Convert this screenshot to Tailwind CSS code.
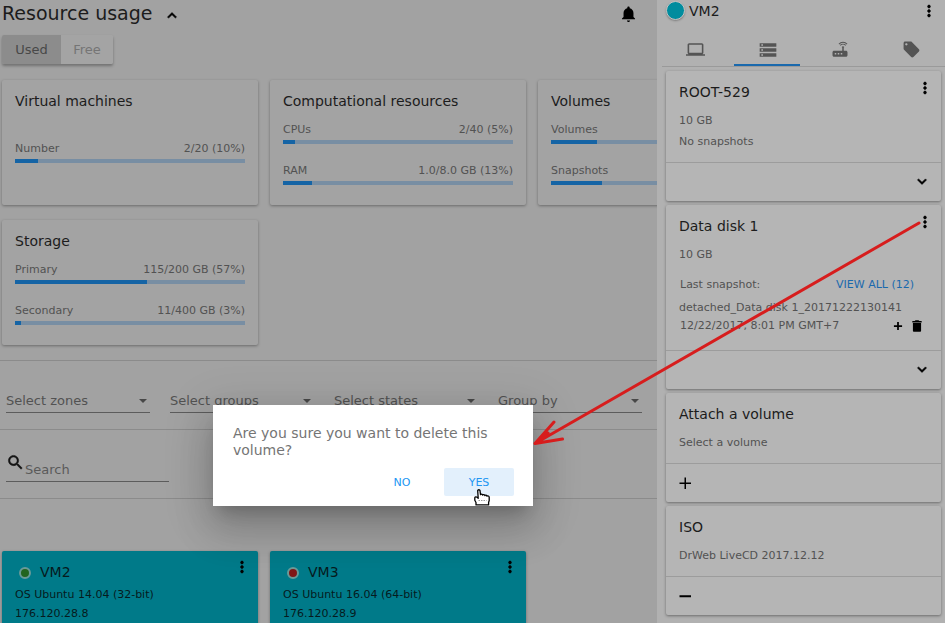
<!DOCTYPE html>
<html lang="en">
<head>
<meta charset="utf-8">
<title>Virtual machines</title>
<script src="https://cdn.jsdelivr.net/npm/@tailwindcss/browser@4"></script>
</head>
<body class="relative h-screen overflow-hidden bg-[#a2a2a2] font-['DejaVu_Sans',sans-serif] text-[11px] leading-4 text-[#525252]">
<svg class="hidden">
  <symbol id="more" viewBox="0 0 24 24"><path d="M12 8c1.100 0 2-.9 2-2s-.9-2-2-2-2 .9-2 2 .9 2 2 2zm0 2c-1.100 0-2 .9-2 2s.9 2 2 2 2-.9 2-2-.9-2-2-2zm0 6c-1.100 0-2 .9-2 2s.9 2 2 2 2-.9 2-2-.9-2-2-2z" stroke="currentColor" stroke-width=".6"/></symbol>
  <symbol id="down" viewBox="0 0 24 24"><path d="M7.410 7.840L12 12.420l4.590-4.580L18 9.250l-6 6-6-6z" stroke="currentColor" stroke-width=".8"/></symbol>
  <symbol id="plus" viewBox="0 0 24 24"><path d="M19 13.500h-5.500V19h-3v-5.500H5v-3h5.500V5h3v5.500H19z"/></symbol>
</svg>

<div class="flex h-full">
  <main class="min-w-0 flex-1 overflow-hidden">
    <header class="flex h-[35px] items-start pl-[2px] pr-5">
      <h1 class="text-[19px] leading-[27px] text-[#1c1c1c]">Resource usage</h1>
      <button aria-label="Collapse" class="ml-[10px] mt-[6px] text-black"><svg class="size-[18px] rotate-180 fill-current"><use href="#down"/></svg></button>
      <button aria-label="Notifications" class="ml-auto mt-[6px] text-black"><svg viewBox="0 0 24 24" class="size-[17px] fill-current"><path d="M12 22.500c1.200 0 2.200-1 2.200-2.200H9.800c0 1.200 1 2.200 2.200 2.200zM19 15.500V10c0-3.300-2.200-6-5.300-6.700v-.8c0-1-.7-1.700-1.700-1.700s-1.700.7-1.700 1.700v.8C7.200 4 5 6.700 5 10v5.500l-2.200 2.200v1.100h18.400v-1.100z"/></svg></button>
    </header>

    <div class="ml-[2px] flex h-[29px] w-fit overflow-hidden rounded-[2px] text-[13px] shadow-[0_2px_3px_rgba(0,0,0,0.3)]">
      <button class="w-[59px] bg-[#8c8c8c] text-[#484848]">Used</button>
      <button class="w-[52px] bg-[#a4a4a4] text-[#757575]">Free</button>
    </div>

    <section class="mt-4 grid grid-cols-[256px_256px_256px] gap-x-3 gap-y-[15px] border-b border-[#8b8b8b] pb-[15px] pl-[2px]">
      <article class="h-[125px] rounded-[2px] bg-[#a3a3a3] px-[13px] pt-[11px] shadow-[0_1px_3px_rgba(0,0,0,0.35)]">
        <h2 class="text-[14px] leading-5 text-[#1c1c1c]">Virtual machines</h2>
        <div class="mt-[30px] flex justify-between"><span>Number</span><span>2/20 (10%)</span></div>
        <div role="progressbar" aria-label="Number" class="mt-[2px] h-1 bg-[#788ea3]"><div class="h-full bg-[#1564a5]" style="width:10%"></div></div>
      </article>
      <article class="h-[125px] rounded-[2px] bg-[#a3a3a3] px-[13px] pt-[11px] shadow-[0_1px_3px_rgba(0,0,0,0.35)]">
        <h2 class="text-[14px] leading-5 text-[#1c1c1c]">Computational resources</h2>
        <div class="mt-[11px] flex justify-between"><span>CPUs</span><span>2/40 (5%)</span></div>
        <div role="progressbar" aria-label="CPUs" class="mt-[2px] h-1 bg-[#788ea3]"><div class="h-full bg-[#1564a5]" style="width:5%"></div></div>
        <div class="mt-[19px] flex justify-between"><span>RAM</span><span>1.0/8.0 GB (13%)</span></div>
        <div role="progressbar" aria-label="RAM" class="mt-[2px] h-1 bg-[#788ea3]"><div class="h-full bg-[#1564a5]" style="width:12.5%"></div></div>
      </article>
      <article class="h-[125px] rounded-[2px] bg-[#a3a3a3] px-[13px] pt-[11px] shadow-[0_1px_3px_rgba(0,0,0,0.35)]">
        <h2 class="text-[14px] leading-5 text-[#1c1c1c]">Volumes</h2>
        <div class="mt-[11px] flex justify-between"><span>Volumes</span></div>
        <div role="progressbar" aria-label="Volumes" class="mt-[2px] h-1 bg-[#788ea3]"><div class="h-full bg-[#1564a5]" style="width:20%"></div></div>
        <div class="mt-[19px] flex justify-between"><span>Snapshots</span></div>
        <div role="progressbar" aria-label="Snapshots" class="mt-[2px] h-1 bg-[#788ea3]"><div class="h-full bg-[#1564a5]" style="width:22%"></div></div>
      </article>
      <article class="h-[125px] rounded-[2px] bg-[#a3a3a3] px-[13px] pt-[11px] shadow-[0_1px_3px_rgba(0,0,0,0.35)]">
        <h2 class="text-[14px] leading-5 text-[#1c1c1c]">Storage</h2>
        <div class="mt-[11px] flex justify-between"><span>Primary</span><span>115/200 GB (57%)</span></div>
        <div role="progressbar" aria-label="Primary" class="mt-[2px] h-1 bg-[#788ea3]"><div class="h-full bg-[#1564a5]" style="width:57.5%"></div></div>
        <div class="mt-[19px] flex justify-between"><span>Secondary</span><span>11/400 GB (3%)</span></div>
        <div role="progressbar" aria-label="Secondary" class="mt-[2px] h-1 bg-[#788ea3]"><div class="h-full bg-[#1564a5]" style="width:2.75%"></div></div>
      </article>
    </section>

    <section class="flex gap-5 border-b border-[#8b8b8b] pb-4 pl-[6px] pt-[29px] text-[13px]">
      <label class="relative w-36 shrink-0 border-b border-[#5c5c5c]"><select aria-label="Zones" class="block h-[22px] w-full appearance-none text-[#525252]"><option>Select zones</option></select><span class="absolute right-[3px] top-[9px] border-x-4 border-t-4 border-x-transparent border-t-[#484848]"></span></label>
      <label class="relative w-36 shrink-0 border-b border-[#5c5c5c]"><select aria-label="Groups" class="block h-[22px] w-full appearance-none text-[#525252]"><option>Select groups</option></select><span class="absolute right-[3px] top-[9px] border-x-4 border-t-4 border-x-transparent border-t-[#484848]"></span></label>
      <label class="relative w-36 shrink-0 border-b border-[#5c5c5c]"><select aria-label="States" class="block h-[22px] w-full appearance-none text-[#525252]"><option>Select states</option></select><span class="absolute right-[3px] top-[9px] border-x-4 border-t-4 border-x-transparent border-t-[#484848]"></span></label>
      <label class="relative w-36 shrink-0 border-b border-[#5c5c5c]"><select aria-label="Group by" class="block h-[22px] w-full appearance-none text-[#525252]"><option>Group by</option></select><span class="absolute right-[3px] top-[9px] border-x-4 border-t-4 border-x-transparent border-t-[#484848]"></span></label>
    </section>

    <section class="border-b border-[#8b8b8b] pb-4 pl-[6px] pt-[23px]">
      <label class="flex h-[29px] w-[163px] border-b border-[#5c5c5c]">
        <svg viewBox="0 0 24 24" class="size-[19px] shrink-0 fill-[#141414] stroke-[#141414] stroke-[.6]"><path d="M15.500 14h-.79l-.28-.27C15.410 12.590 16 11.110 16 9.500 16 5.910 13.090 3 9.500 3S3 5.910 3 9.500 5.910 16 9.500 16c1.610 0 3.090-.59 4.230-1.570l.27.28v.79l5 4.990L20.490 19l-4.990-5zm-6 0C7.010 14 5 11.990 5 9.500S7.010 5 9.500 5 14 7.010 14 9.500 11.990 14 9.500 14z"/></svg>
        <input type="search" aria-label="Search" placeholder="Search" class="mt-[6px] h-5 w-full min-w-0 text-[13px] outline-none placeholder:text-[#5a5a5a]">
      </label>
    </section>

    <section class="grid grid-cols-[256px_256px] gap-3 pl-[2px] pt-[52px]">
      <article class="h-[125px] rounded-[2px] bg-[#007a89] pl-[13px] pr-[7px] pt-[6px] text-[#061b1e] shadow-[0_1px_3px_rgba(0,0,0,0.35)]">
        <div class="flex items-start">
          <span class="ml-1 mt-[10px] size-3 rounded-full border-2 border-[#6a9a98] bg-[#22641f]"></span>
          <h2 class="ml-[9px] mt-[5px] text-[14px] leading-5">VM2</h2>
          <button aria-label="VM2 actions" class="ml-auto mt-px text-black"><svg class="size-[18px] fill-current"><use href="#more"/></svg></button>
        </div>
        <p class="mt-[5px]">OS Ubuntu 14.04 (32-bit)</p>
        <p class="mt-[3px]">176.120.28.8</p>
      </article>
      <article class="h-[125px] rounded-[2px] bg-[#007a89] pl-[13px] pr-[7px] pt-[6px] text-[#061b1e] shadow-[0_1px_3px_rgba(0,0,0,0.35)]">
        <div class="flex items-start">
          <span class="ml-1 mt-[10px] size-3 rounded-full border-2 border-[#6a9a98] bg-[#801616]"></span>
          <h2 class="ml-[9px] mt-[5px] text-[14px] leading-5">VM3</h2>
          <button aria-label="VM3 actions" class="ml-auto mt-px text-black"><svg class="size-[18px] fill-current"><use href="#more"/></svg></button>
        </div>
        <p class="mt-[5px]">OS Ubuntu 16.04 (64-bit)</p>
        <p class="mt-[3px]">176.120.28.9</p>
      </article>
    </section>
  </main>

  <aside class="w-72 shrink-0 overflow-hidden bg-[#b1b1b1] pl-[5px]">
    <header class="flex h-[33px] items-start pl-1 pr-[7px]">
      <span class="mt-px size-[19px] rounded-full border border-[#c6c6c6] bg-[#008c9e] shadow-[0_1px_2px_rgba(0,0,0,0.3)]"></span>
      <h2 class="ml-1 mt-px text-[14px] leading-5 text-[#1c1c1c]">VM2</h2>
      <button aria-label="More" class="ml-auto mt-[2px] text-black"><svg class="size-[18px] fill-current"><use href="#more"/></svg></button>
    </header>
    <nav class="grid h-[34px] grid-cols-4 gap-[6px] border-b border-[#9a9a9a] pr-px text-[#545454]">
      <button aria-label="Virtual machine" class="flex justify-center pl-px pt-[7px]"><svg viewBox="0 0 24 24" class="size-[19px] fill-current"><path d="M20 18c1.100 0 1.990-.9 1.990-2L22 6c0-1.100-.9-2-2-2H4c-1.100 0-2 .9-2 2v10c0 1.100.9 2 2 2H0v2h24v-2h-4zM4 6h16v10H4V6z"/></svg></button>
      <button aria-label="Storage" class="flex justify-center border-b-2 border-[#1a69ad] pl-px pt-[7px]"><svg viewBox="0 0 24 24" class="size-5 fill-current"><path d="M2 20h20v-4H2v4zm2-3h2v2H4v-2zM2 4v4h20V4H2zm4 3H4V5h2v2zm-4 7h20v-4H2v4zm2-3h2v2H4v-2z"/></svg></button>
      <button aria-label="Network" class="flex justify-center pl-px pt-2"><svg viewBox="0 0 24 24" class="size-[18px] fill-current"><path d="M4 13h11V8h2v5h3c1.100 0 2 .9 2 2v4c0 1.100-.9 2-2 2H4c-1.100 0-2-.9-2-2v-4c0-1.100.9-2 2-2zm1 3v2h2v-2H5zm4 0v2h2v-2H9zm4 0v2h2v-2h-2zM12.800 6.300l-.9-.9a5.700 5.700 0 0 1 8.200 0l-.9.9a4.500 4.500 0 0 0-6.400 0zM11 4.500l-.9-.9a8.300 8.300 0 0 1 11.800 0l-.9.9a7 7 0 0 0-10 0zM14.200 7.900a2.500 2.500 0 0 1 3.600 0l-.8.8h-2z"/></svg></button>
      <button aria-label="Tags" class="flex justify-center pl-px pt-[7px]"><svg viewBox="0 0 24 24" class="size-[19px] fill-current"><path d="M21.410 11.580l-9-9C12.050 2.220 11.550 2 11 2H4c-1.100 0-2 .9-2 2v7c0 .55.220 1.050.59 1.420l9 9c.36.36.86.58 1.410.58s1.050-.22 1.410-.59l7-7c.37-.36.59-.86.59-1.410s-.23-1.060-.59-1.420zM5.500 7C4.670 7 4 6.330 4 5.500S4.670 4 5.500 4 7 4.670 7 5.500 6.330 7 5.500 7z"/></svg></button>
    </nav>

    <div class="flex flex-col gap-1 pl-1 pr-1 pt-1">
      <article class="rounded-[2px] bg-[#b5b5b5] shadow-[0_1px_3px_rgba(0,0,0,0.4)]">
        <div class="h-[91px] pl-[13px] pr-[7px] pt-[8px]">
          <div class="flex items-start justify-between">
            <h3 class="mt-[3px] text-[14px] leading-5 text-[#1c1c1c]">ROOT-529</h3>
            <button aria-label="ROOT-529 actions" class="text-black"><svg class="size-[18px] fill-current"><use href="#more"/></svg></button>
          </div>
          <p class="mt-[11px]">10 GB</p>
          <p class="mt-[5px]">No snapshots</p>
        </div>
        <div class="flex h-[39px] items-center justify-end border-t border-[#9c9c9c] pr-[10px]"><button aria-label="Expand" class="text-black"><svg class="size-[18px] fill-current"><use href="#down"/></svg></button></div>
      </article>

      <article class="rounded-[2px] bg-[#b5b5b5] shadow-[0_1px_3px_rgba(0,0,0,0.4)]">
        <div class="h-[145px] pl-[13px] pr-[7px] pt-[8px]">
          <div class="flex items-start justify-between">
            <h3 class="mt-[3px] text-[14px] leading-5 text-[#1c1c1c]">Data disk 1</h3>
            <button aria-label="Data disk 1 actions" class="text-black"><svg class="size-[18px] fill-current"><use href="#more"/></svg></button>
          </div>
          <p class="mt-[11px]">10 GB</p>
          <div class="mt-[14px] flex justify-between pl-px pr-5"><span>Last snapshot:</span><a href="#" class="text-[#1a69ad]">VIEW ALL (12)</a></div>
          <p class="mt-[7px]">detached_Data disk 1_20171222130141</p>
          <div class="mt-[2px] flex items-center pl-px pr-[10px]"><span>12/22/2017, 8:01 PM GMT+7</span>
            <button aria-label="Add snapshot" class="ml-auto text-black"><svg class="size-[14px] fill-current"><use href="#plus"/></svg></button>
            <button aria-label="Delete snapshot" class="ml-[5px] text-black"><svg viewBox="0 0 24 24" class="size-[14px] fill-current"><path d="M5 20c0 1.100.9 2 2 2h10c1.100 0 2-.9 2-2V7H5v13zM20 3.500h-4L14.500 2h-5L8 3.500H4v2.500h16z"/></svg></button>
          </div>
        </div>
        <div class="flex h-[39px] items-center justify-end border-t border-[#9c9c9c] pr-[10px]"><button aria-label="Expand" class="text-black"><svg class="size-[18px] fill-current"><use href="#down"/></svg></button></div>
      </article>

      <article class="rounded-[2px] bg-[#b5b5b5] shadow-[0_1px_3px_rgba(0,0,0,0.4)]">
        <div class="h-[70px] px-[13px] pt-[11px]">
          <h3 class="text-[14px] leading-5 text-[#1c1c1c]">Attach a volume</h3>
          <p class="mt-[11px]">Select a volume</p>
        </div>
        <div class="flex h-[39px] items-center border-t border-[#9c9c9c] pl-[10px]"><button aria-label="Attach" class="text-black"><svg viewBox="0 0 18 18" class="size-[18px] fill-none stroke-current stroke-[1.5]"><path d="M3.500 9.250h11.500M9.250 3.500v11.500"/></svg></button></div>
      </article>

      <article class="rounded-[2px] bg-[#b5b5b5] shadow-[0_1px_3px_rgba(0,0,0,0.4)]">
        <div class="h-[70px] px-[13px] pt-[11px]">
          <h3 class="text-[14px] leading-5 text-[#1c1c1c]">ISO</h3>
          <p class="mt-[11px]">DrWeb LiveCD 2017.12.12</p>
        </div>
        <div class="flex h-[39px] items-center border-t border-[#9c9c9c] pl-[10px]"><button aria-label="Detach" class="text-black"><svg viewBox="0 0 18 18" class="size-[18px] fill-none stroke-current stroke-2"><path d="M3.500 9.250h11.500"/></svg></button></div>
      </article>
    </div>
  </aside>
</div>

<div role="dialog" aria-labelledby="question" class="absolute left-[213px] top-[405px] w-80 bg-white pb-[10px] pl-5 pr-[19px] pt-5 shadow-[0_11px_15px_-7px_rgba(0,0,0,0.2),0_24px_38px_3px_rgba(0,0,0,0.14),0_9px_46px_8px_rgba(0,0,0,0.12)]">
  <p id="question" class="text-[14px] leading-[17px] text-[#757575]">Are you sure you want to delete this volume?</p>
  <div class="mt-[9px] flex justify-end gap-[7px] text-[#2196f3]">
    <button class="h-7 w-[70px] rounded-[2px] pt-px">NO</button>
    <button class="h-7 w-[70px] rounded-[2px] bg-[#e3f0fc] pt-px">YES</button>
  </div>
</div>

<!-- Pointer over the confirm button -->
<svg viewBox="0 0 16 17" class="pointer-events-none absolute left-[474px] top-[489px] h-[17px] w-4">
  <path d="M3.700 1.700c0-1.300 2.200-1.300 2.300 0l.5 4c.3-.8 2-.7 2.200.3.400-.7 2-.5 2.200.5.500-.6 1.800-.3 2 .6.900-.6 2.300 0 2.300 1.200v3.200l-.6 2v2.400H2v-2.400L.8 11.200V8.600c.3-1.100 1.800-1 2.400-.2l1 1z" fill="#fff" stroke="#000" stroke-width="1.300" stroke-linejoin="round"/>
  <path d="M4.500 11.500h8" stroke="#999" stroke-dasharray="1.500 1"/>
</svg>

<!-- Arrow from the disk menu to the dialog -->
<svg viewBox="0 0 945 623" class="pointer-events-none absolute left-0 top-0 h-[623px] w-[945px] fill-none stroke-[#d71d1d] stroke-[3]" stroke-linecap="round" stroke-linejoin="round">
  <path d="M919 223L535 443.500M554 422L535 443.500L562.500 439M535 443.500L548 433"/>
</svg>
</body>
</html>
